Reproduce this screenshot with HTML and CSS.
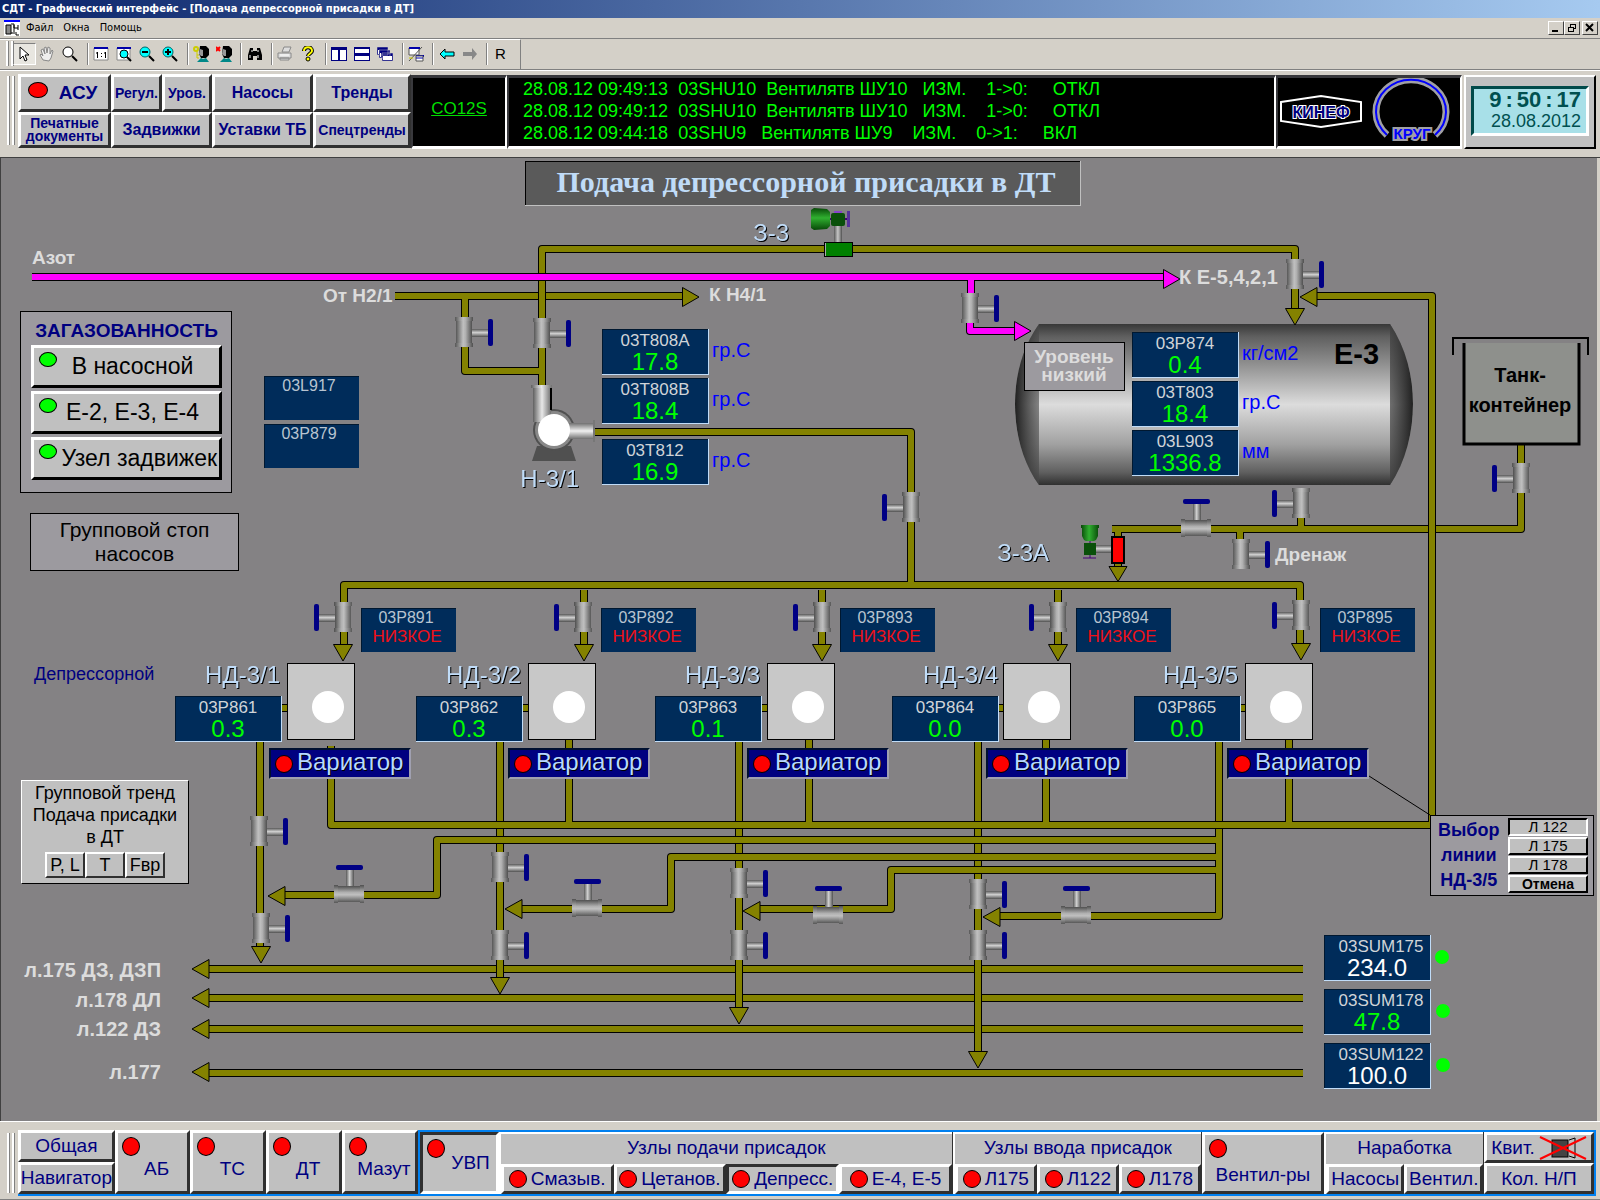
FILE: index.html
```html
<!DOCTYPE html>
<html lang="ru">
<head>
<meta charset="utf-8">
<title>СДТ - Графический интерфейс</title>
<link rel="stylesheet" href="styles.css">
</head>
<body>
<header class="titlebar">СДТ - Графический интерфейс - [Подача депрессорной присадки в ДТ]</header>

<nav class="menubar">
  <svg class="app-icon" viewBox="0 0 16 16" aria-hidden="true"><path fill="#fff" d="M0 0h16v16H0z"/><path fill="#00f" d="M0 0h16v2H0z"/><path d="M2 5h5v9H2z" fill="#888" stroke="#000"/><path d="M7 4h3v4h4M10 5v9M7 13h2M14 5v5M12 12v3h3" fill="none" stroke="#000"/></svg>
  <button class="menu">Файл</button>
  <button class="menu">Окна</button>
  <button class="menu">Помощь</button>
  <span class="winctl">
    <button aria-label="Свернуть"><svg viewBox="0 0 12 10"><path d="M2 8h6" stroke="#000" stroke-width="2"/></svg></button>
    <button aria-label="Восстановить"><svg viewBox="0 0 12 10"><path d="M4 1.500h6M4.500 1v3M9.500 1v5M8 5.500h2M2 4.500h6M2.500 4v5M7.500 4v5M2 8.500h6" stroke="#000" fill="none"/></svg></button>
    <button class="close" aria-label="Закрыть"><svg viewBox="0 0 12 10"><path d="M2 1l7 7M9 1L2 8" stroke="#000" stroke-width="2"/></svg></button>
  </span>
</nav>

<div class="toolbar">
  <span class="grip"></span>
  <button class="on" aria-label="Выбор"><svg viewBox="0 0 16 16"><path d="M4 1v12l3-3 2 5 2-1-2-5h4z" fill="#fff" stroke="#000"/></svg></button>
  <button aria-label="Рука"><svg viewBox="0 0 16 16"><path d="M4 14l-3-5 1-1 2 2-2-6 2-1 2 5-1-6 2-1 1 6 1-6 2 1v6l2-4 1 1-2 7-2 3z" fill="#eee" stroke="#888"/></svg></button>
  <button aria-label="Лупа"><svg viewBox="0 0 16 16"><circle cx="6" cy="6" r="5" fill="#fff" stroke="#000"/><path d="M10 10l5 5" stroke="#000" stroke-width="2"/></svg></button>
  <i></i>
  <button aria-label="Масштаб 1:1"><svg viewBox="0 0 16 16"><path d="M1 2h14v12H1z" fill="#fff" stroke="#888"/><path d="M1 1h14v2H1z" fill="#00a"/><path d="M4.500 6v6M3 7h1M12.500 6v6M11 7h1M8.500 7v1M8.500 10v1" stroke="#000"/></svg></button>
  <button aria-label="Вписать"><svg viewBox="0 0 16 16"><path d="M1 2h13v12H1z" fill="#fff" stroke="#888"/><path d="M1 1h14v2H1z" fill="#00a"/><circle cx="8" cy="8" r="4" fill="#0ff" stroke="#000"/><path d="M11 11l4 4" stroke="#000" stroke-width="2"/></svg></button>
  <button aria-label="Уменьшить"><svg viewBox="0 0 16 16"><circle cx="6" cy="6" r="5" fill="#0ff" stroke="#066"/><path d="M3 6h6M10 10l5 5" stroke="#000" stroke-width="2"/></svg></button>
  <button aria-label="Увеличить"><svg viewBox="0 0 16 16"><circle cx="6" cy="6" r="5" fill="#0ff" stroke="#066"/><path d="M3 6h6M6 3v6M10 10l5 5" stroke="#000" stroke-width="2"/></svg></button>
  <i></i>
  <button aria-label="Вход"><svg viewBox="0 0 16 16"><path d="M7 0h6l3 3v6l-3 3H8L6 8z" fill="#000"/><path d="M7 3l3 1v6H8L6 8z" fill="#999"/><path d="M4 16l4-4 2 1 3-1 3 4z" fill="#088"/><circle cx="3" cy="3" r="2" fill="none" stroke="#cc0" stroke-width="2"/><path d="M4 5v7M4 9h2M4 12h2" stroke="#cc0"/></svg></button>
  <button aria-label="Выход"><svg viewBox="0 0 16 16"><path d="M7 0h6l3 3v6l-3 3H8L6 8z" fill="#000"/><path d="M7 3l3 1v6H8L6 8z" fill="#999"/><path d="M4 16l4-4 2 1 3-1 3 4z" fill="#088"/><path d="M0 1l4 4M4 1L0 5" stroke="#f00" stroke-width="2"/></svg></button>
  <i></i>
  <button aria-label="Поиск"><svg viewBox="0 0 16 16"><path d="M3 2h3v3h4V2h3l2 7v5h-5v-4H6v4H1V9z" fill="#000"/><path d="M3 9v3M11 9v3M5 4v2M11 4v2" stroke="#fff"/></svg></button>
  <i></i>
  <button aria-label="Печать"><svg viewBox="0 0 16 16"><path d="M5 6l2-5h7l-2 5zM1 7h13v5H1zM3 12h9v2H3z" fill="#ddd" stroke="#888"/><path d="M3 9h9" stroke="#fff"/></svg></button>
  <button aria-label="Справка"><svg viewBox="0 0 16 16"><path d="M4 5c0-5 8-5 8 0 0 2-4 3-4 5" fill="none" stroke="#000" stroke-width="4"/><path d="M4 5c0-5 8-5 8 0 0 2-4 3-4 5" fill="none" stroke="#ff0" stroke-width="2"/><circle cx="8" cy="13" r="2" fill="#ff0" stroke="#000"/></svg></button>
  <i></i>
  <button aria-label="Рядом"><svg viewBox="0 0 16 16"><path d="M0 1h16v14H0z" fill="#000080"/><path d="M1 4h6v10H1zM9 4h6v10H9z" fill="#fff"/></svg></button>
  <button aria-label="Друг под другом"><svg viewBox="0 0 16 16"><path d="M0 1h16v14H0z" fill="#000080"/><path d="M1 3h14v4H1zM1 10h14v4H1z" fill="#fff"/></svg></button>
  <button aria-label="Каскад"><svg viewBox="0 0 16 16"><path d="M0 1h11v8H0zM2 4h11v8H2zM5 7h11v8H5z" fill="#000080" stroke="#d4d0c8" stroke-width=".5"/><path d="M6 10h9v4H6zM3 7h1v4H3zM1 4h1v4H1z" fill="#fff"/></svg></button>
  <i></i>
  <button aria-label="Окна системы"><svg viewBox="0 0 16 16"><path d="M1 2h10v7H1z" fill="#fff" stroke="#555"/><path d="M1 1h11v2H1zM8 9h8v2H8z" fill="#00a"/><path d="M8 10h7v5H8z" fill="#fff" stroke="#555"/><path d="M8 12h7" stroke="#00a"/><path d="M1 15L14 1" stroke="#555"/><path d="M1 12h4" stroke="#cc0"/></svg></button>
  <i></i>
  <button aria-label="Назад"><svg viewBox="0 0 16 16"><path d="M1 8l5-5v3h9v4H6v3z" fill="#0ff" stroke="#000"/></svg></button>
  <button aria-label="Вперёд"><svg viewBox="0 0 16 16"><path d="M15 8l-5-6v4H1v4h9v4z" fill="#888"/></svg></button>
  <i></i>
  <button class="letter">R</button>
</div>

<section class="topbar">
  <span class="grip"></span>
  <div class="keys">
    <button class="key big"><span class="led"></span>АСУ</button>
    <button class="key small">Регул.</button>
    <button class="key small">Уров.</button>
    <button class="key">Насосы</button>
    <button class="key">Тренды</button>
    <button class="key small">Печатные документы</button>
    <button class="key wide">Задвижки</button>
    <button class="key">Уставки ТБ</button>
    <button class="key small">Спецтренды</button>
  </div>
  <div class="screen tag"><a href="#co12s">CO12S</a></div>
  <div class="screen log">
    <p>28.08.12 09:49:13  03SHU10  Вентилятв ШУ10   ИЗМ.    1-&gt;0:     ОТКЛ</p>
    <p>28.08.12 09:49:12  03SHU10  Вентилятв ШУ10   ИЗМ.    1-&gt;0:     ОТКЛ</p>
    <p>28.08.12 09:44:18  03SHU9   Вентилятв ШУ9    ИЗМ.    0-&gt;1:     ВКЛ</p>
  </div>
  <div class="screen logos">
    <svg viewBox="0 0 182 68" role="img" aria-label="КИНЕФ, КРУГ">
      <path d="M3 24L43 18 83 24V43L43 49 3 43z" fill="none" stroke="#fff" stroke-width="2"/>
      <text class="kinef" x="43" y="40">КИНЕФ</text>
      <path d="M109 57A35 32 0 1 1 157 57" fill="none" stroke="#a0a0a4" stroke-width="7"/>
      <path d="M109 57A35 32 0 1 1 157 57" fill="none" stroke="#00f" stroke-width="2"/>
      <text class="krug" x="134" y="61">КРУГ</text>
    </svg>
  </div>
  <div class="clock"><div class="lcd"><time class="time"><span>9</span><span>:</span><span>50</span><span>:</span><span>17</span></time><time class="date">28.08.2012</time></div></div>
</section>

<main class="mimic">
<svg class="scheme" viewBox="0 157 1600 964">
  <defs>
    <linearGradient id="metal"><stop offset="0" stop-color="#585858"/><stop offset=".45" stop-color="#c0c0c0"/><stop offset=".6" stop-color="#b0b0b0"/><stop offset="1" stop-color="#505050"/></linearGradient>
    <linearGradient id="metalV" x2="0" y2="1"><stop offset="0" stop-color="#585858"/><stop offset=".45" stop-color="#d0d0d0"/><stop offset="1" stop-color="#505050"/></linearGradient>
    <linearGradient id="bright"><stop offset="0" stop-color="#606060"/><stop offset=".5" stop-color="#e8e8e8"/><stop offset="1" stop-color="#707070"/></linearGradient>
    <linearGradient id="brightV" x2="0" y2="1"><stop offset="0" stop-color="#707070"/><stop offset=".5" stop-color="#f0f0f0"/><stop offset="1" stop-color="#707070"/></linearGradient>
    <linearGradient id="tank" x2="0" y2="1"><stop offset="0" stop-color="#383838"/><stop offset=".08" stop-color="#606060"/><stop offset=".25" stop-color="#909090"/><stop offset=".5" stop-color="#dcdcdc"/><stop offset=".75" stop-color="#a0a0a0"/><stop offset=".92" stop-color="#606060"/><stop offset="1" stop-color="#303030"/></linearGradient>
    <linearGradient id="capL"><stop offset="0" stop-color="#202020"/><stop offset="1" stop-color="#484848" stop-opacity=".6"/></linearGradient>
    <linearGradient id="capR"><stop offset="0" stop-color="#404040" stop-opacity=".7"/><stop offset="1" stop-color="#202020"/></linearGradient>
    <linearGradient id="greenV" x2="0" y2="1"><stop offset="0" stop-color="#084808"/><stop offset=".45" stop-color="#30b030"/><stop offset="1" stop-color="#084808"/></linearGradient>
    <linearGradient id="greenH"><stop offset="0" stop-color="#084808"/><stop offset=".45" stop-color="#30b030"/><stop offset="1" stop-color="#084808"/></linearGradient>
    <g id="valve">
      <rect x="16" y="12" width="18" height="8" fill="url(#metalV)"/>
      <rect x="1" width="16" height="30" fill="url(#metal)"/>
      <rect width="18" height="4" fill="url(#metal)"/><rect y="26" width="18" height="4" fill="url(#metal)"/>
      <rect x="33" y="2" width="5" height="27" rx="2" fill="#000084"/>
    </g>
    <g id="valve-left"><use href="#valve" transform="matrix(-1 0 0 1 18 0)"/></g>
    <g id="valve-up"><use href="#valve" transform="matrix(0 -1 1 0 0 18)"/></g>
    <path id="down" d="M-9.500 .5H9.500L0 17z"/>
    <path id="left" d="M17-9.500V9.500L0 0z"/>
    <path id="right" d="M.5-9.500V9.500L17 0z"/>
    <g id="box"><rect width="107" height="46" fill="#002c5a"/><path d="M0 .5h107M.5 0v46" stroke="#001830"/><path d="M0 45.500h107M106.500 0v46" stroke="#c0dcf8"/></g>
    <g id="plate"><rect width="95" height="44" fill="#002c5a"/><path d="M0 .5h95M.5 0v44" stroke="#001830"/></g>
    <g id="pump"><rect x=".5" y=".5" width="67" height="76" fill="#c8c8c8" stroke="#000"/><circle cx="41" cy="44" r="16" fill="#fff"/></g>
  </defs>

  <rect x="525" y="161" width="556" height="45" fill="#5a5a5a"/>
  <path d="M525 161.500h556M525.500 161v45" stroke="#000"/><path d="M525 205.500h556M1080.500 161v45" stroke="#c0c0c0"/>
  <text class="heading" x="806" y="192">Подача депрессорной присадки в ДТ</text>

  <!-- product lines -->
  <g class="shell"><path d="M207 969H1303M207 998H1303M207 1029H1303M207 1073H1303"/></g>
  <g class="core"><path d="M207 969H1303M207 998H1303M207 1029H1303M207 1073H1303"/></g>
  <g class="tip"><use href="#left" x="192" y="969"/><use href="#left" x="192" y="998"/><use href="#left" x="192" y="1029"/><use href="#left" x="192" y="1072"/></g>

  <!-- downcomers to the product lines -->
  <g class="shell"><path d="M260 740V948M500 740V979M739 740V1008M978 740V1052"/></g>
  <g class="core"><path d="M260 740V948M500 740V979M739 740V1008M978 740V1052"/></g>
  <g class="tip"><use href="#down" x="261" y="946"/><use href="#down" x="500" y="977"/><use href="#down" x="739" y="1007"/><use href="#down" x="978" y="1051"/></g>

  <!-- distribution of pump 5 -->
  <g class="shell"><path d="M1219 740V916H999M1219 840H437V895H284M1219 857H671V909H521M1219 870H891V909H759"/></g>
  <g class="core"><path d="M1219 740V916H999M1219 840H437V895H284M1219 857H671V909H521M1219 870H891V909H759"/></g>
  <g class="tip"><use href="#left" x="268" y="896"/><use href="#left" x="505" y="909"/><use href="#left" x="743" y="911"/><use href="#left" x="983" y="917"/></g>

  <!-- container line -->
  <g class="shell"><path d="M1521 444V529H1112M1118 529V568M1301 515V529M1240 529V540"/></g>
  <g class="core"><path d="M1521 444V529H1112M1118 529V568M1301 515V529M1240 529V540"/></g>
  <g class="tip"><path d="M1109 566.500h18l-9 15z"/></g>

  <!-- return header -->
  <g class="shell"><path d="M331 746V825H1432V296H1316M569 738V825M809 738V825M1046 738V825M1289 738V825"/></g>
  <g class="core"><path d="M331 746V825H1432V296H1316M569 738V825M809 738V825M1046 738V825M1289 738V825"/></g>

  <!-- Н2/1 to Н4/1 -->
  <g class="shell"><path d="M395 296H683M465 296V371H540"/></g>
  <g class="core"><path d="M395 296H683M465 296V371H540"/></g>
  <g class="tip"><use href="#right" x="682" y="297"/></g>

  <!-- pump Н-3/1 to the tank -->
  <g class="shell"><path d="M542 386V249H1295V309"/></g>
  <g class="core"><path d="M542 386V249H1295V309M536 371h8"/></g>
  <g class="tip"><use href="#left" x="1300" y="297"/></g>

  <!-- suction manifold -->
  <g class="shell"><path d="M595 432H911V584M344 646V585H1300V645M584 590V646M822 590V646M1058 590V646"/></g>
  <g class="core"><path d="M595 432H911V586M344 646V585H1300V645M584 590V646M822 590V646M1058 590V646"/></g>
  <g class="tip"><use href="#down" x="343" y="644"/><use href="#down" x="584" y="644"/><use href="#down" x="822" y="644"/><use href="#down" x="1058" y="644"/><use href="#down" x="1301" y="643"/></g>

  <!-- nitrogen -->
  <g class="shell"><path d="M32 277H1165M971 279V294M970 320V331H1016"/></g>
  <g class="core gas"><path d="M32 277H1165M971 279V294M970 320V331H1016"/></g>
  <g class="tip gas"><use href="#right" x="1163" y="279"/></g>

  <!-- tank Е-3 -->
  <path d="M1039 324H1390C1406 348 1413 376 1413 404S1406 461 1390 485H1039C1022 461 1015 432 1015 404S1022 348 1039 324z" fill="url(#tank)"/>
  <path d="M1039 324C1022 348 1015 376 1015 404S1022 461 1039 485z" fill="url(#capL)"/>
  <path d="M1390 324C1406 348 1413 376 1413 404S1406 461 1390 485z" fill="url(#capR)"/>
  <g class="tip"><use href="#down" x="1295" y="308"/></g>
  <g class="tip gas"><use href="#right" x="1014" y="331"/></g>
  <text class="tankname" x="1334" y="364">Е-3</text>
  <rect x="1024.500" y="342.500" width="100" height="48" fill="#9c9a9f" stroke="#000"/>
  <text class="place mid" x="1074" y="363">Уровень</text><text class="place mid" x="1074" y="381">низкий</text>

  <!-- tank container -->
  <path d="M1464 343V444H1579V343" fill="#8e908c" stroke="#000" stroke-width="3"/>
  <path d="M1453 355V338H1588V355" fill="none" stroke="#000" stroke-width="2"/>
  <text class="cont" x="1520" y="382">Танк-</text><text class="cont" x="1520" y="412">контейнер</text>

  <!-- hand valves -->
  <use href="#valve" x="455" y="317"/><use href="#valve" x="533" y="318"/><use href="#valve" x="961" y="293"/><use href="#valve" x="1286" y="259"/><use href="#valve" x="1232" y="539"/>
  <use href="#valve" x="250" y="816"/><use href="#valve" x="252" y="913"/><use href="#valve" x="491" y="852"/><use href="#valve" x="491" y="930"/><use href="#valve" x="730" y="868"/><use href="#valve" x="730" y="930"/><use href="#valve" x="969" y="879"/><use href="#valve" x="969" y="930"/>
  <use href="#valve-left" x="902" y="492"/><use href="#valve-left" x="1512" y="463"/><use href="#valve-left" x="1292" y="488"/><use href="#valve-left" x="334" y="602"/><use href="#valve-left" x="574" y="602"/><use href="#valve-left" x="813" y="602"/><use href="#valve-left" x="1049" y="602"/><use href="#valve-left" x="1292" y="600"/>
  <use href="#valve-up" x="1181" y="519"/><use href="#valve-up" x="334" y="885"/><use href="#valve-up" x="572" y="899"/><use href="#valve-up" x="813" y="906"/><use href="#valve-up" x="1061" y="906"/>

  <!-- motor valve З-3 -->
  <path d="M829 219H850" stroke="#407" stroke-width="2"/>
  <path d="M811 210l3-2 13 1 3 3v14l-3 3-13 1-3-2z" fill="url(#greenV)"/>
  <rect x="834" y="211" width="8" height="3" fill="#84c"/>
  <rect x="831" y="213" width="14" height="13" rx="2" fill="#0a500a"/><rect x="847" y="211" width="3" height="16" fill="#539"/>
  <rect x="834" y="226" width="8" height="17" fill="url(#metal)"/>
  <rect x="824.500" y="242.500" width="28" height="14" fill="#008000" stroke="#000"/><path d="M825.500 243v13" stroke="#aaa"/>

  <!-- motor valve З-3А -->
  <path d="M1081 525h18v3h-1v8l-2 4-2 1h-8l-2-1-2-4v-8h-1z" fill="url(#greenH)"/>
  <path d="M1090 541v17M1083 558h13" stroke="#407"/>
  <rect x="1094" y="545" width="17" height="8" fill="url(#metalV)"/>
  <rect x="1084" y="543" width="12" height="12" fill="#0a500a"/>
  <rect x="1112" y="537" width="12" height="26" fill="#f00" stroke="#000" stroke-width="2"/>

  <!-- pump Н-3/1 -->
  <path d="M537 446h34l5 15h-44z" fill="#505050"/>
  <circle cx="554" cy="430" r="21" fill="#505050"/><circle cx="554" cy="430" r="19" fill="#888"/>
  <rect x="533" y="386" width="18" height="36" fill="url(#bright)"/><rect x="531" y="385" width="21" height="3" fill="url(#bright)"/><path d="M551 388v22" stroke="#000" stroke-width="2"/>
  <rect x="568" y="423" width="27" height="16" fill="url(#brightV)"/><rect x="593" y="420" width="2" height="22" fill="#777"/>
  <circle cx="554" cy="430" r="16" fill="#fff"/>

  <!-- dosing pumps -->
  <g class="shell"><path d="M281 708h7M521 708h8M761 708h7M998 708h6M1240 708h6"/></g>
  <g class="core"><path d="M281 708h7M521 708h8M761 708h7M998 708h6M1240 708h6"/></g>
  <use href="#pump" x="287" y="663"/><use href="#pump" x="528" y="663"/><use href="#pump" x="767" y="663"/><use href="#pump" x="1003" y="663"/><use href="#pump" x="1245" y="663"/>
  <path d="M1369 776L1430 815" stroke="#000"/>

  <!-- captions -->
  <text class="place" x="32" y="264">Азот</text>
  <text class="place" x="323" y="302">От Н2/1</text>
  <text class="place" x="709" y="301">К Н4/1</text>
  <text class="place wide" x="1179" y="284">К Е-5,4,2,1</text>
  <text class="place" x="1275" y="561">Дренаж</text>
  <text class="place wide end" x="161" y="977">л.175 ДЗ, ДЗП</text>
  <text class="place wide end" x="161" y="1007">л.178 ДЛ</text>
  <text class="place wide end" x="161" y="1036">л.122 ДЗ</text>
  <text class="place wide end" x="161" y="1079">л.177</text>
  <text class="note" x="34" y="680">Депрессорной</text>
  <text class="unit-name" x="789" y="241">З-3</text>
  <text class="unit-name" x="579" y="487">Н-3/1</text>
  <text class="unit-name" x="1049" y="561">З-3А</text>
  <text class="unit-name" x="280" y="683">НД-3/1</text>
  <text class="unit-name" x="521" y="683">НД-3/2</text>
  <text class="unit-name" x="760" y="683">НД-3/3</text>
  <text class="unit-name" x="998" y="683">НД-3/4</text>
  <text class="unit-name" x="1238" y="683">НД-3/5</text>

  <!-- readouts -->
  <g transform="translate(602 329)"><use href="#box"/><text class="tagname" x="53" y="17">03T808A</text><text class="val" x="53" y="41">17.8</text><text class="eu" x="110" y="28">гр.С</text></g>
  <g transform="translate(602 378)"><use href="#box"/><text class="tagname" x="53" y="17">03T808B</text><text class="val" x="53" y="41">18.4</text><text class="eu" x="110" y="28">гр.С</text></g>
  <g transform="translate(602 439)"><use href="#box"/><text class="tagname" x="53" y="17">03T812</text><text class="val" x="53" y="41">16.9</text><text class="eu" x="110" y="28">гр.С</text></g>
  <g transform="translate(1132 332)"><use href="#box"/><text class="tagname" x="53" y="17">03P874</text><text class="val" x="53" y="41">0.4</text><text class="eu" x="110" y="28">кг/см2</text></g>
  <g transform="translate(1132 381)"><use href="#box"/><text class="tagname" x="53" y="17">03T803</text><text class="val" x="53" y="41">18.4</text><text class="eu" x="110" y="28">гр.С</text></g>
  <g transform="translate(1132 430)"><use href="#box"/><text class="tagname" x="53" y="17">03L903</text><text class="val" x="53" y="41">1336.8</text><text class="eu" x="110" y="28">мм</text></g>
  <g transform="translate(175 696)"><use href="#box"/><text class="tagname" x="53" y="17">03P861</text><text class="val" x="53" y="41">0.3</text></g>
  <g transform="translate(416 696)"><use href="#box"/><text class="tagname" x="53" y="17">03P862</text><text class="val" x="53" y="41">0.3</text></g>
  <g transform="translate(655 696)"><use href="#box"/><text class="tagname" x="53" y="17">03P863</text><text class="val" x="53" y="41">0.1</text></g>
  <g transform="translate(892 696)"><use href="#box"/><text class="tagname" x="53" y="17">03P864</text><text class="val" x="53" y="41">0.0</text></g>
  <g transform="translate(1134 696)"><use href="#box"/><text class="tagname" x="53" y="17">03P865</text><text class="val" x="53" y="41">0.0</text></g>
  <g transform="translate(1324 935)"><use href="#box"/><text class="tagname" x="57" y="17">03SUM175</text><text class="val manual" x="53" y="41">234.0</text><circle cx="118" cy="22" r="7" fill="#0f0"/></g>
  <g transform="translate(1324 989)"><use href="#box"/><text class="tagname" x="57" y="17">03SUM178</text><text class="val" x="53" y="41">47.8</text><circle cx="119" cy="22" r="7" fill="#0f0"/></g>
  <g transform="translate(1324 1043)"><use href="#box"/><text class="tagname" x="57" y="17">03SUM122</text><text class="val manual" x="53" y="41">100.0</text><circle cx="119" cy="22" r="7" fill="#0f0"/></g>
  <g transform="translate(264 376)"><use href="#plate"/><text class="tagname dim" x="45" y="15">03L917</text></g>
  <g transform="translate(264 424)"><use href="#plate"/><text class="tagname dim" x="45" y="15">03P879</text></g>
  <g transform="translate(361 608)"><use href="#plate"/><text class="tagname dim" x="45" y="15">03P891</text><text class="low" x="46" y="34">НИЗКОЕ</text></g>
  <g transform="translate(601 608)"><use href="#plate"/><text class="tagname dim" x="45" y="15">03P892</text><text class="low" x="46" y="34">НИЗКОЕ</text></g>
  <g transform="translate(840 608)"><use href="#plate"/><text class="tagname dim" x="45" y="15">03P893</text><text class="low" x="46" y="34">НИЗКОЕ</text></g>
  <g transform="translate(1076 608)"><use href="#plate"/><text class="tagname dim" x="45" y="15">03P894</text><text class="low" x="46" y="34">НИЗКОЕ</text></g>
  <g transform="translate(1320 608)"><use href="#plate"/><text class="tagname dim" x="45" y="15">03P895</text><text class="low" x="46" y="34">НИЗКОЕ</text></g>

  <!-- operator controls -->
  <foreignObject x="269" y="748" width="142" height="31"><button class="drive"><span class="led"></span>Вариатор</button></foreignObject>
  <foreignObject x="508" y="748" width="142" height="31"><button class="drive"><span class="led"></span>Вариатор</button></foreignObject>
  <foreignObject x="747" y="748" width="142" height="31"><button class="drive"><span class="led"></span>Вариатор</button></foreignObject>
  <foreignObject x="986" y="748" width="142" height="31"><button class="drive"><span class="led"></span>Вариатор</button></foreignObject>
  <foreignObject x="1227" y="748" width="142" height="31"><button class="drive"><span class="led"></span>Вариатор</button></foreignObject>

  <foreignObject x="20" y="311" width="212" height="182">
    <div class="panel gas-panel">
      <h2>ЗАГАЗОВАННОСТЬ</h2>
      <button class="key"><span class="led ok"></span>В насосной</button>
      <button class="key"><span class="led ok"></span>Е-2, Е-3, Е-4</button>
      <button class="key long"><span class="led ok"></span>Узел задвижек</button>
    </div>
  </foreignObject>
  <foreignObject x="30" y="513" width="209" height="58"><button class="panel stop">Групповой стоп<br>насосов</button></foreignObject>
  <foreignObject x="21" y="780" width="168" height="104">
    <div class="trend">
      <p>Групповой тренд<br>Подача присадки<br>в ДТ</p>
      <div class="row"><button class="key">P, L</button><button class="key">T</button><button class="key">Fвр</button></div>
    </div>
  </foreignObject>
  <foreignObject x="1430" y="815" width="164" height="81">
    <div class="panel line-panel">
      <p>Выбор<br>линии<br>НД-3/5</p>
      <div class="choices"><button class="key on">Л 122</button><button class="key">Л 175</button><button class="key">Л 178</button><button class="key strong">Отмена</button></div>
    </div>
  </foreignObject>
</svg>
</main>

<footer class="bottombar">
  <span class="grip"></span>
  <div class="nav units">
    <div class="stack"><button class="key">Общая</button><button class="key">Навигатор</button></div>
    <button class="key unit"><span class="led"></span>АБ</button>
    <button class="key unit"><span class="led"></span>ТС</button>
    <button class="key unit"><span class="led"></span>ДТ</button>
    <button class="key unit"><span class="led"></span>Мазут</button>
  </div>
  <div class="nav context">
    <button class="key unit on"><span class="led"></span>УВП</button>
    <div class="group"><h3>Узлы подачи присадок</h3><div class="row"><button class="key"><span class="led"></span>Смазыв.</button><button class="key"><span class="led"></span>Цетанов.</button><button class="key on"><span class="led"></span>Депресс.</button><button class="key"><span class="led"></span>Е-4, Е-5</button></div></div>
    <div class="group"><h3>Узлы ввода присадок</h3><div class="row"><button class="key"><span class="led"></span>Л175</button><button class="key"><span class="led"></span>Л122</button><button class="key"><span class="led"></span>Л178</button></div></div>
    <button class="key unit fans"><span class="led"></span>Вентил-ры</button>
    <div class="group"><h3>Наработка</h3><div class="row"><button class="key">Насосы</button><button class="key">Вентил.</button></div></div>
    <div class="stack"><button class="key ack">Квит.<svg viewBox="0 0 48 24" aria-hidden="true"><path d="M30 4l6-2v20l-6-2" fill="none" stroke="#000"/><rect x="13" y="4" width="16" height="17" fill="#444" stroke="#000"/><path d="M1 1l46 22M47 1L1 23" stroke="#f00" stroke-width="2"/></svg></button><button class="key">Кол. Н/П</button></div>
  </div>
</footer>
</body>
</html>
```

FILE: styles.css
```css
* { box-sizing: border-box; }
body {
  margin: 0;
  min-height: 100vh;
  display: flex;
  flex-direction: column;
  background: #d4d0c8;
  color: #000;
  font-family: "Liberation Sans", Arial, sans-serif;
  font-size: 16px;
}
button { font: inherit; color: inherit; margin: 0; padding: 0; border: 0; background: none; }
p, h2, h3 { margin: 0; font-weight: normal; }

.titlebar {
  height: 18px;
  padding-left: 2px;
  background: linear-gradient(90deg, #0a246a, #a6caf0);
  color: #fff;
  font: bold 11px/18px "DejaVu Sans Condensed", "DejaVu Sans", sans-serif;
  white-space: nowrap;
}
.menubar {
  display: flex;
  align-items: center;
  gap: 10px;
  height: 21px;
  padding: 0 2px 0 4px;
  border-bottom: 1px solid #808080;
  font: 11px/16px "DejaVu Sans Condensed", "DejaVu Sans", sans-serif;
}
.app-icon { width: 16px; height: 16px; margin-right: -4px; }
.winctl { display: flex; margin-left: auto; }
.winctl button {
  width: 16px;
  height: 14px;
  padding: 1px;
  border: 1px solid;
  border-color: #fff #404040 #404040 #fff;
}
.winctl svg { display: block; width: 12px; height: 10px; }
.winctl .close { margin-left: 2px; }

.grip {
  width: 7px;
  border: solid #fff;
  border-width: 0 2px;
  box-shadow: 1px 0 0 #808080, inset -1px 0 0 #d4d0c8, inset 1px 0 0 #808080;
}
.toolbar {
  display: flex;
  align-items: center;
  align-self: flex-start;
  height: 30px;
  width: 521px;
  padding: 0 8px 2px 0;
  border-top: 1px solid #fff;
  border-right: 1px solid #808080;
}
.toolbar .grip { height: 25px; margin: 0 0 0 6px; }
.toolbar button { width: 23px; height: 22px; flex: none; display: grid; place-items: center; }
.toolbar .on { border: 1px solid; border-color: #808080 #fff #fff #808080; background: #e8e6e0; }
.toolbar svg { width: 16px; height: 16px; }
.toolbar i { width: 8px; height: 22px; border-left: 1px solid #808080; margin-left: 5px; margin-right: -5px; box-shadow: inset 1px 0 0 #fff; }
.toolbar .letter { font-size: 15px; }

.key {
  display: flex;
  align-items: center;
  justify-content: center;
  min-width: 0;
  border: 3px solid;
  border-color: #fff #303030 #303030 #fff;
  background: #c0c0c0;
  color: #000080;
  white-space: nowrap;
}
.key.on { border-color: #303030 #fff #fff #303030; }
.led {
  flex: none;
  width: 18px;
  height: 18px;
  border: 1px solid #000;
  border-radius: 50%;
  background: #f00;
}
.led.ok { background: #0f0; }

.topbar {
  display: flex;
  align-items: stretch;
  height: 88px;
  padding: 4px 4px 8px 7px;
  border-top: 1px solid #808080;
  box-shadow: inset 0 1px 0 #fff;
}
.topbar .grip { margin: 2px 4px 4px 0; }
.keys {
  display: grid;
  grid-template: 38px 36px / 93px 51px 50px 101px 98px;
}
.keys .key { font-size: 16px; font-weight: bold; }
.keys .key.big { font-size: 19px; gap: 11px; padding-right: 4px; }
.keys .key.big .led { width: 20px; height: 16px; margin-bottom: 6px; }
.keys .key.small { font-size: 14px; line-height: 13px; white-space: normal; }
.keys .wide { grid-column: span 2; }
.screen {
  margin-top: 1px;
  background: #000;
  color: #0f0;
  border: solid;
  border-width: 3px 2px 3px 2px;
  border-color: #38383c #fff #fff #38383c;
}
.tag { width: 96px; display: grid; place-items: center; padding-bottom: 6px; font-size: 17px; }
.tag a { color: #0d0; }
.log { flex: 1; min-width: 0; padding-left: 14px; overflow: hidden; font-size: 18px; line-height: 22px; }
.log p { white-space: pre; }
.logos { width: 186px; }
.logos svg { display: block; width: 182px; height: 68px; }
.kinef { font: bold 16px "Liberation Sans", sans-serif; text-anchor: middle; fill: #000080; stroke: #fff; stroke-width: 2px; paint-order: stroke; }
.krug { font: bold 15px "Liberation Sans", sans-serif; text-anchor: middle; fill: #00f; stroke: #a0a0a4; stroke-width: 4px; paint-order: stroke; }
.clock {
  width: 132px;
  margin: 1px 0 0 2px;
  padding: 9px 5px;
  border: solid;
  border-width: 2px;
  border-color: #fff #000 #000 #fff;
  background: #c0c0c0;
}
.lcd {
  display: flex;
  flex-direction: column;
  align-items: flex-end;
  height: 50px;
  padding-right: 5px;
  border: 3px solid;
  border-color: #004a4a #fff #fff #004a4a;
  background: #a8e0e8;
  color: #005050;
}
.time { display: flex; gap: 4px; font: bold 22px/22px "Liberation Sans", sans-serif; }
.date { font-size: 18px; line-height: 20px; }

.mimic {
  flex: 1;
  background: #848284;
  border-bottom: 1px solid #fff;
  box-shadow: inset 2px 2px 0 -1px #404040, inset -3px 0 0 #d4d0c8;
}
.scheme { display: block; width: 100%; height: auto; }
.shell { fill: none; stroke: #000; stroke-width: 8px; stroke-linejoin: round; }
.core { fill: none; stroke: #848200; stroke-width: 6px; stroke-linejoin: round; }
.core.gas { stroke: #f0f; }
.tip { fill: #848200; stroke: #000; }
.tip.gas { fill: #f0f; }
.heading { font: bold 30px "Liberation Serif", serif; fill: #c0dcf8; text-anchor: middle; }
.place { font-size: 19px; font-weight: bold; fill: #dcdcdc; }
.place.wide { font-size: 20px; }
.mid { text-anchor: middle; }
.end { text-anchor: end; }
.tankname { font-size: 29px; font-weight: bold; }
.cont { font-size: 20px; font-weight: bold; text-anchor: middle; }
.note { font-size: 18px; fill: #000080; }
.unit-name { font-size: 24px; fill: #c0dcf8; text-anchor: end; filter: drop-shadow(1px 1px 0 #000); }
.tagname { font-size: 17px; fill: #d0d4d8; text-anchor: middle; }
.tagname.dim { font-size: 16px; fill: #b8c4d0; }
.val { font-size: 24px; fill: #0f0; text-anchor: middle; }
.val.manual { fill: #fff; }
.eu { font-size: 20px; fill: #00f; }
.low { font-size: 17px; fill: #f01018; text-anchor: middle; }

.drive {
  display: flex;
  align-items: center;
  gap: 4px;
  width: 100%;
  height: 100%;
  padding: 0 0 3px 4px;
  border: 2px solid;
  border-color: #001030 #a0a0b0 #a0a0b0 #001030;
  background: #000080;
  color: #b8d8ff;
  font-size: 24px;
  line-height: 24px;
  text-shadow: 1px 1px 0 #000;
}
.drive .led { margin-top: 3px; }
.panel { width: 100%; height: 100%; border: 1px solid #000; background: #9c9a9f; }
.gas-panel { display: flex; flex-direction: column; gap: 3px; padding: 7px 9px 0 10px; }
.gas-panel h2 { color: #000080; font-size: 19px; line-height: 23px; font-weight: bold; text-align: center; }
.gas-panel .key { position: relative; height: 43px; padding-left: 12px; color: #000; border-color: #fff #000 #000 #fff; font-size: 23px; }
.gas-panel .key.long { justify-content: flex-end; padding-right: 2px; }
.gas-panel .led { position: absolute; left: 5px; top: 4px; height: 15px; }
.stop { font-size: 21px; line-height: 24px; }
.trend {
  height: 100%;
  padding-top: 1px;
  border: 1px solid;
  border-color: #fff #000 #000 #fff;
  background: #c0c0c0;
  font-size: 18px;
  line-height: 22px;
  text-align: center;
}
.row { display: flex; }
.trend .row { justify-content: center; padding-top: 4px; }
.trend .key { width: 40px; height: 26px; border-width: 2px; color: #000; font-size: 18px; }
.line-panel { display: flex; justify-content: space-between; padding: 2px 5px 2px 7px; }
.line-panel p { color: #000080; font-size: 18px; line-height: 25px; font-weight: bold; text-align: center; }
.choices { display: grid; gap: 1px; width: 80px; }
.choices .key { border-width: 2px; border-color: #fff #000 #000 #fff; color: #000; font-size: 15px; line-height: 14px; }
.choices .on { border-color: #000 #fff #fff #000; }
.choices .strong { font-weight: bold; font-size: 14px; }

.bottombar {
  display: flex;
  height: 78px;
  padding: 8px 4px 3px 7px;
  border-bottom: 1px solid #808080;
}
.bottombar .grip { margin: 3px 4px 3px 0; }
.nav {
  min-width: 0;
  display: grid;
  border-bottom: 2px solid #0080f0;
  color: #000080;
  font-size: 19px;
}
.units { flex: 401; grid-template-columns: 97fr 76fr 76fr 76fr 76fr; }
.context {
  flex: 1178;
  grid-template-columns: 79fr 454fr 249fr 122fr 160fr 110fr;
  border: 2px solid #0080f0;
}
.stack { display: grid; grid-template-rows: 1fr 1fr; min-width: 0; }
.unit { position: relative; padding: 14px 0 0 8px; }
.unit .led { position: absolute; left: 4px; top: 4px; height: 19px; }
.unit.on { justify-content: flex-end; padding: 0 6px 0 0; }
.unit.fans { padding: 24px 0 0; }
.group { display: flex; flex-direction: column; min-width: 0; border-left: 2px solid #fff; border-right: 1px solid #303030; background: #c0c0c0; }
.group h3 { flex: 1; font-size: 19px; line-height: 28px; text-align: center; border-top: 2px solid #fff; }
.group .row .key { flex: 1; height: 30px; gap: 4px; }
.ack { gap: 4px; }
.ack svg { width: 48px; height: 24px; }
```
